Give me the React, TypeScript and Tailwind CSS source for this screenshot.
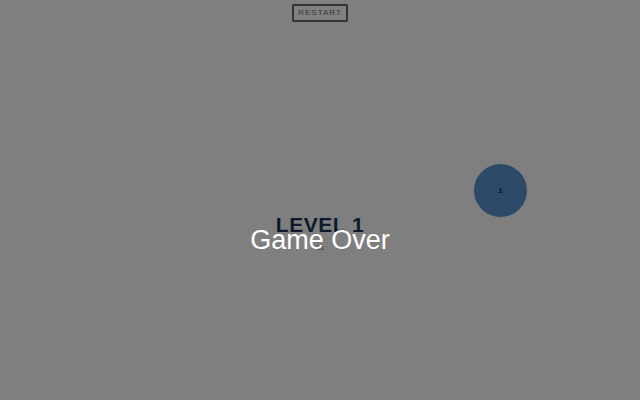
export default function App() {
  return (
    <div
      className="relative h-[400px] w-[640px] overflow-hidden bg-[#7f7f7f]"
      style={{ fontFamily: '"Liberation Sans", Arial, sans-serif' }}
    >
      {/* top bar */}
      <div className="flex justify-center pt-1">
        <button className="h-[18px] w-[56px] rounded-[2px] border-2 border-[#333] text-[8px] leading-none tracking-[1px] text-[#3a3a3a]">
          RESTART
        </button>
      </div>

      {/* level label */}
      <div className="absolute left-0 right-0 top-[212px] text-center text-[21px] font-bold leading-[26px] tracking-[0.5px] text-[#0e1a2c]">
        LEVEL 1
      </div>

      {/* timer */}
      <div className="absolute left-0 right-0 top-[244px] text-center text-[7px] leading-[8px] text-[#3a3a3a]">
        0s
      </div>

      {/* target */}
      <div className="absolute left-[474px] top-[164px] flex h-[53px] w-[53px] items-center justify-center rounded-full bg-[#2e4a69] pt-[2px] text-[7px] font-bold text-[#111]">
        1
      </div>

      {/* game over overlay */}
      <div className="absolute left-0 right-0 top-[225px] text-center text-[27px] leading-[30px] text-white">
        Game Over
      </div>
    </div>
  );
}
